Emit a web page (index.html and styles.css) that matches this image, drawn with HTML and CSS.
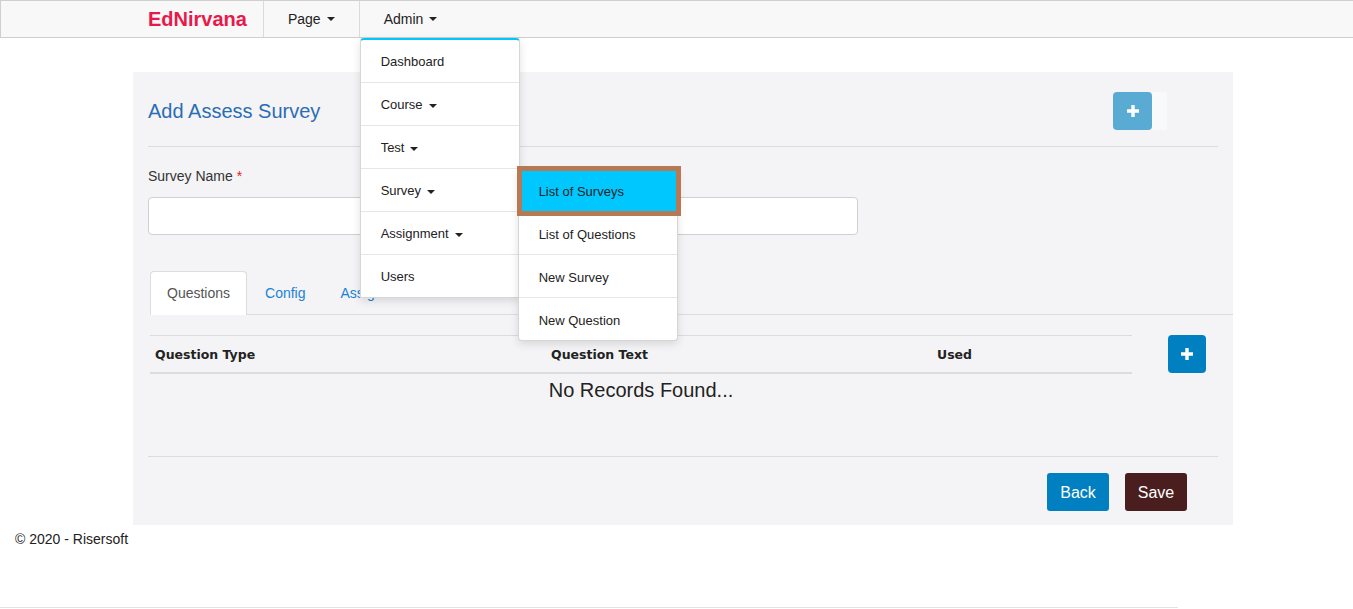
FILE: index.html
```html
<!DOCTYPE html>
<html>
<head>
<meta charset="utf-8">
<title>EdNirvana</title>
<link rel="stylesheet" href="styles.css">
</head>
<body>
<nav class="navbar">
  <a class="brand">EdNirvana</a>
  <ul class="nav">
    <li class="nav-item">Page<b class="caret"></b></li>
    <li class="nav-item">Admin<b class="caret"></b>
      <ul class="dropdown">
        <li>Dashboard</li>
        <li>Course<b class="caret"></b></li>
        <li>Test<b class="caret"></b></li>
        <li class="has-sub">Survey<b class="caret"></b>
          <ul class="submenu">
            <li class="active">List of Surveys</li>
            <li>List of Questions</li>
            <li>New Survey</li>
            <li>New Question</li>
          </ul>
        </li>
        <li>Assignment<b class="caret"></b></li>
        <li>Users</li>
      </ul>
    </li>
  </ul>
</nav>

<main class="main">
  <section class="panel">
    <div class="panel-head">
      <h2 class="title">Add Assess Survey</h2>
      <div class="head-tools">
        <button class="btn-add light"><svg width="12" height="12" viewBox="0 0 12 12"><path d="M4.3 0h3.4v4.3H12v3.4H7.7V12H4.3V7.7H0V4.3h4.3z" fill="#fff"/></svg></button>
        <span class="strip"></span>
      </div>
    </div>
    <hr class="rule first">
    <label class="label">Survey Name <span class="req">*</span></label>
    <input class="input" type="text">

    <ul class="tabs">
      <li class="tab active">Questions</li>
      <li class="tab">Config</li>
      <li class="tab">Assignment</li>
    </ul>

    <div class="table-row">
      <table class="grid">
        <thead>
          <tr><th class="c1">Question Type</th><th class="c2">Question Text</th><th class="c3">Used</th></tr>
        </thead>
        <tbody>
          <tr><td colspan="3" class="empty">No Records Found...</td></tr>
        </tbody>
      </table>
      <button class="btn-add"><svg width="12" height="12" viewBox="0 0 12 12"><path d="M4.3 0h3.4v4.3H12v3.4H7.7V12H4.3V7.7H0V4.3h4.3z" fill="#fff"/></svg></button>
    </div>

    <hr class="rule bottom">
    <div class="actions">
      <button class="btn back">Back</button>
      <button class="btn save">Save</button>
    </div>
  </section>
  <footer class="footer">© 2020 - Risersoft</footer>
  <div class="end-line"></div>
</main>
</body>
</html>
```

FILE: styles.css
```css
*, *::before, *::after { box-sizing: border-box; }
html, body { margin: 0; padding: 0; }
body {
  font-family: "Liberation Sans", Arial, sans-serif;
  font-size: 14px;
  color: #333;
  background: #fff;
}
ul { list-style: none; margin: 0; padding: 0; }

.navbar {
  display: flex;
  height: 38px;
  background: #f8f8f8;
  border: 1px solid #cfcfcf;
  border-right: 0;
}
.brand {
  margin-left: 147px;
  padding-right: 16px;
  font-size: 20px;
  font-weight: bold;
  color: #e8194b;
  line-height: 36px;
}
.nav { display: flex; }
.nav-item {
  position: relative;
  display: flex;
  align-items: center;
  padding: 0 24px 0 24px;
  border-left: 1px solid #dadada;
  color: #222;
  font-size: 14px;
}
.caret {
  display: inline-block;
  width: 0;
  height: 0;
  margin-left: 6px;
  border-top: 4px solid #222;
  border-left: 4px solid transparent;
  border-right: 4px solid transparent;
  vertical-align: middle;
}

.dropdown {
  position: absolute;
  left: 0;
  top: calc(100% + 1px);
  width: 160px;
  background: #fff;
  border: 1px solid #d6d6d6;
  border-top: 2px solid #00c8ff;
  border-radius: 4px 4px 0 0;
  box-shadow: 0 3px 8px rgba(0,0,0,.12);
  z-index: 10;
}
.dropdown > li {
  position: relative;
  height: 43px;
  line-height: 44px;
  padding-left: 20px;
  border-bottom: 1px solid #e6e6e6;
  font-size: 13px;
  color: #222;
}
.dropdown > li:last-child { border-bottom: 0; height: 42px; }
.dropdown .caret { margin-left: 6px; }

.submenu {
  position: absolute;
  left: calc(100% - 1px);
  top: 0;
  width: 160px;
  background: #fff;
  border: 1px solid #d6d6d6;
  border-top: 0;
  border-radius: 0 0 4px 4px;
  box-shadow: 0 3px 8px rgba(0,0,0,.12);
  line-height: normal;
  z-index: 11;
}
.submenu li {
  position: relative;
  height: 43px;
  line-height: 46px;
  padding-left: 20px;
  border-bottom: 1px solid #e6e6e6;
  font-size: 13px;
  color: #222;
}
.submenu li:last-child { border-bottom: 0; height: 42px; }
.submenu li.active { background: #00c8ff; }
.submenu li.active::after {
  content: "";
  position: absolute;
  left: -2px;
  top: -3px;
  width: 164px;
  height: 50px;
  border: 5px solid #b77954;
  z-index: 2;
}

.main { padding-top: 34px; }
.panel {
  margin-left: 133px;
  width: 1100px;
  background: #f4f4f6;
  padding: 20px 15px 14px;
}
.panel-head {
  display: flex;
  align-items: center;
  justify-content: space-between;
  height: 38px;
}
.title {
  margin: 0;
  font-size: 20px;
  font-weight: normal;
  color: #2b6db5;
  line-height: 24px;
}
.head-tools {
  display: flex;
  margin-right: 51px;
}
.strip {
  width: 15px;
  height: 38px;
  background: #f8f9fb;
}
.btn-add {
  display: flex;
  align-items: center;
  justify-content: center;
  width: 38px;
  height: 38px;
  padding: 0;
  border: 0;
  border-radius: 4px;
  background: #0080c0;
}
.btn-add.light { width: 39px; background: #5aabd4; }

.rule {
  border: 0;
  height: 1px;
  background: #dcdcdf;
  margin: 0;
}
.rule.first { margin-top: 16px; margin-bottom: 19px; }
.label {
  display: block;
  line-height: 20px;
  margin-bottom: 11px;
  color: #333;
}
.req { color: #e0202c; }
.input {
  display: block;
  width: 710px;
  height: 38px;
  border: 1px solid #cfcfd4;
  border-radius: 4px;
  background: #fff;
}

.tabs {
  display: flex;
  margin: 36px -15px 0 2px;
  border-bottom: 1px solid #dcdcdf;
}
.tab {
  padding: 0 16px;
  line-height: 42px;
  border: 1px solid transparent;
  border-bottom: 0;
  border-radius: 4px 4px 0 0;
  color: #1a82d6;
  font-size: 14px;
}
.tab.active {
  background: #fff;
  border-color: #dcdcdf;
  color: #555;
  margin-bottom: -1px;
  line-height: 43px;
}
.tab + .tab { padding-left: 17px; }

.table-row {
  display: flex;
  align-items: flex-start;
  gap: 36px;
  margin: 20px 0 0 2px;
}
.grid {
  width: 982px;
  border-collapse: collapse;
}
.grid th {
  text-align: left;
  font-family: "DejaVu Sans", Verdana, sans-serif;
  font-size: 12.5px;
  font-weight: bold;
  color: #222;
  line-height: 20px;
  padding: 9px 5px 7px;
  border-top: 1px solid #dcdcdf;
  border-bottom: 2px solid #dcdcdf;
}
.grid .c1 { width: 396px; }
.grid .c2 { width: 386px; }
.grid .c3 { width: 200px; }
.grid .empty {
  text-align: center;
  font-size: 20px;
  line-height: 22px;
  padding: 5px 0 0;
  color: #222;
}

.rule.bottom { margin-top: 55px; margin-bottom: 16px; }
.actions {
  display: flex;
  justify-content: flex-end;
  gap: 16px;
  margin-right: 31px;
}
.btn {
  height: 38px;
  width: 62px;
  border: 0;
  border-radius: 3px;
  color: #fff;
  font-family: "Liberation Sans", Arial, sans-serif;
  font-size: 16px;
  padding: 2px 0 0;
}
.back { background: #0080c0; }
.save { background: #4a1e1e; }

.footer {
  margin-top: 4px;
  padding-left: 15px;
  line-height: 20px;
  font-size: 14px;
  color: #222;
}
.end-line {
  margin-top: 58px;
  width: 1178px;
  height: 1px;
  background: #e3e3e3;
}
```
